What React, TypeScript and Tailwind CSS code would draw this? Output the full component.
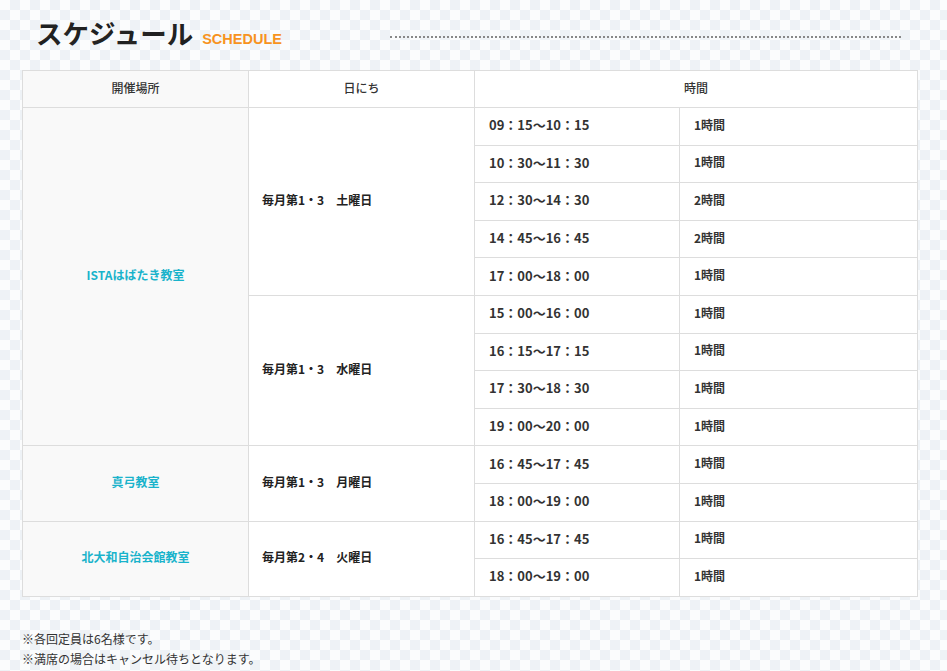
import React from 'react';

type Slot = { time: string; length: string };
type Day = { label: string; slots: Slot[] };
type Place = { name: string; days: Day[] };

const schedule: Place[] = [
  {
    name: 'ISTAはばたき教室',
    days: [
      {
        label: '毎月第1・3　土曜日',
        slots: [
          { time: '09：15～10：15', length: '1時間' },
          { time: '10：30～11：30', length: '1時間' },
          { time: '12：30～14：30', length: '2時間' },
          { time: '14：45～16：45', length: '2時間' },
          { time: '17：00～18：00', length: '1時間' },
        ],
      },
      {
        label: '毎月第1・3　水曜日',
        slots: [
          { time: '15：00～16：00', length: '1時間' },
          { time: '16：15～17：15', length: '1時間' },
          { time: '17：30～18：30', length: '1時間' },
          { time: '19：00～20：00', length: '1時間' },
        ],
      },
    ],
  },
  {
    name: '真弓教室',
    days: [
      {
        label: '毎月第1・3　月曜日',
        slots: [
          { time: '16：45～17：45', length: '1時間' },
          { time: '18：00～19：00', length: '1時間' },
        ],
      },
    ],
  },
  {
    name: '北大和自治会館教室',
    days: [
      {
        label: '毎月第2・4　火曜日',
        slots: [
          { time: '16：45～17：45', length: '1時間' },
          { time: '18：00～19：00', length: '1時間' },
        ],
      },
    ],
  },
];

const cell = 'border border-[#dddddd] text-[12px] leading-none pb-[3px]';

export default function App() {
  return (
    <div className="min-h-screen bg-[#fbfcfd] bg-[image:conic-gradient(#eef2f6_25%,#fbfcfd_0_50%,#eef2f6_0_75%,#fbfcfd_0)] bg-[length:20px_20px] font-['Noto_Sans_CJK_JP','Noto_Sans',sans-serif] text-[#222]">
      <div className="ml-[22px] w-[895px] pt-[16px] pb-[8px]">
        {/* Title */}
        <div className="flex items-center pl-4 pr-4 h-[38px]">
          <div className="flex items-baseline">
            <h2 className="text-[26.5px] font-bold leading-none text-[#222] -ml-[2px]">スケジュール</h2>
            <span className="ml-[9px] font-['Liberation_Sans',sans-serif] text-[14.5px] font-bold text-[#f7931e]">
              SCHEDULE
            </span>
          </div>
          <div className="ml-auto mt-[4px] w-[511px] border-t-2 border-dotted border-[#888]" />
        </div>

        {/* Table */}
        <table className="mt-[16px] w-[895px] border-collapse bg-white table-fixed">
          <colgroup>
            <col className="w-[226px]" />
            <col className="w-[226px]" />
            <col className="w-[205px]" />
            <col className="w-[238px]" />
          </colgroup>
          <thead>
            <tr className="h-[37px]">
              <th className={`${cell} bg-[#f9f9f9] font-medium text-[#333]`}>開催場所</th>
              <th className={`${cell} font-medium text-[#333]`}>日にち</th>
              <th className={`${cell} font-medium text-[#333]`} colSpan={2}>
                時間
              </th>
            </tr>
          </thead>
          <tbody>
            {schedule.map((place) => {
              const total = place.days.reduce((n, d) => n + d.slots.length, 0);
              return place.days.map((day, di) =>
                day.slots.map((slot, si) => (
                  <tr key={`${place.name}-${di}-${si}`} className="h-[37.6px]">
                    {di === 0 && si === 0 && (
                      <td rowSpan={total} className={`${cell} bg-[#f9f9f9] text-center font-bold text-[#19b3cb]`}>
                        {place.name}
                      </td>
                    )}
                    {si === 0 && (
                      <td rowSpan={day.slots.length} className={`${cell} pl-[13px] font-bold`}>
                        {day.label}
                      </td>
                    )}
                    <td className={`${cell} pl-[14px] text-[13px] font-bold text-[#333]`}>{slot.time}</td>
                    <td className={`${cell} pl-[14px] font-bold text-[#333]`}>{slot.length}</td>
                  </tr>
                ))
              );
            })}
          </tbody>
        </table>

        {/* Notes */}
        <div className="mt-[32px] text-[12px] leading-[20px] text-[#333]">
          <p>※各回定員は6名様です。</p>
          <p>※満席の場合はキャンセル待ちとなります。</p>
        </div>
      </div>
    </div>
  );
}
